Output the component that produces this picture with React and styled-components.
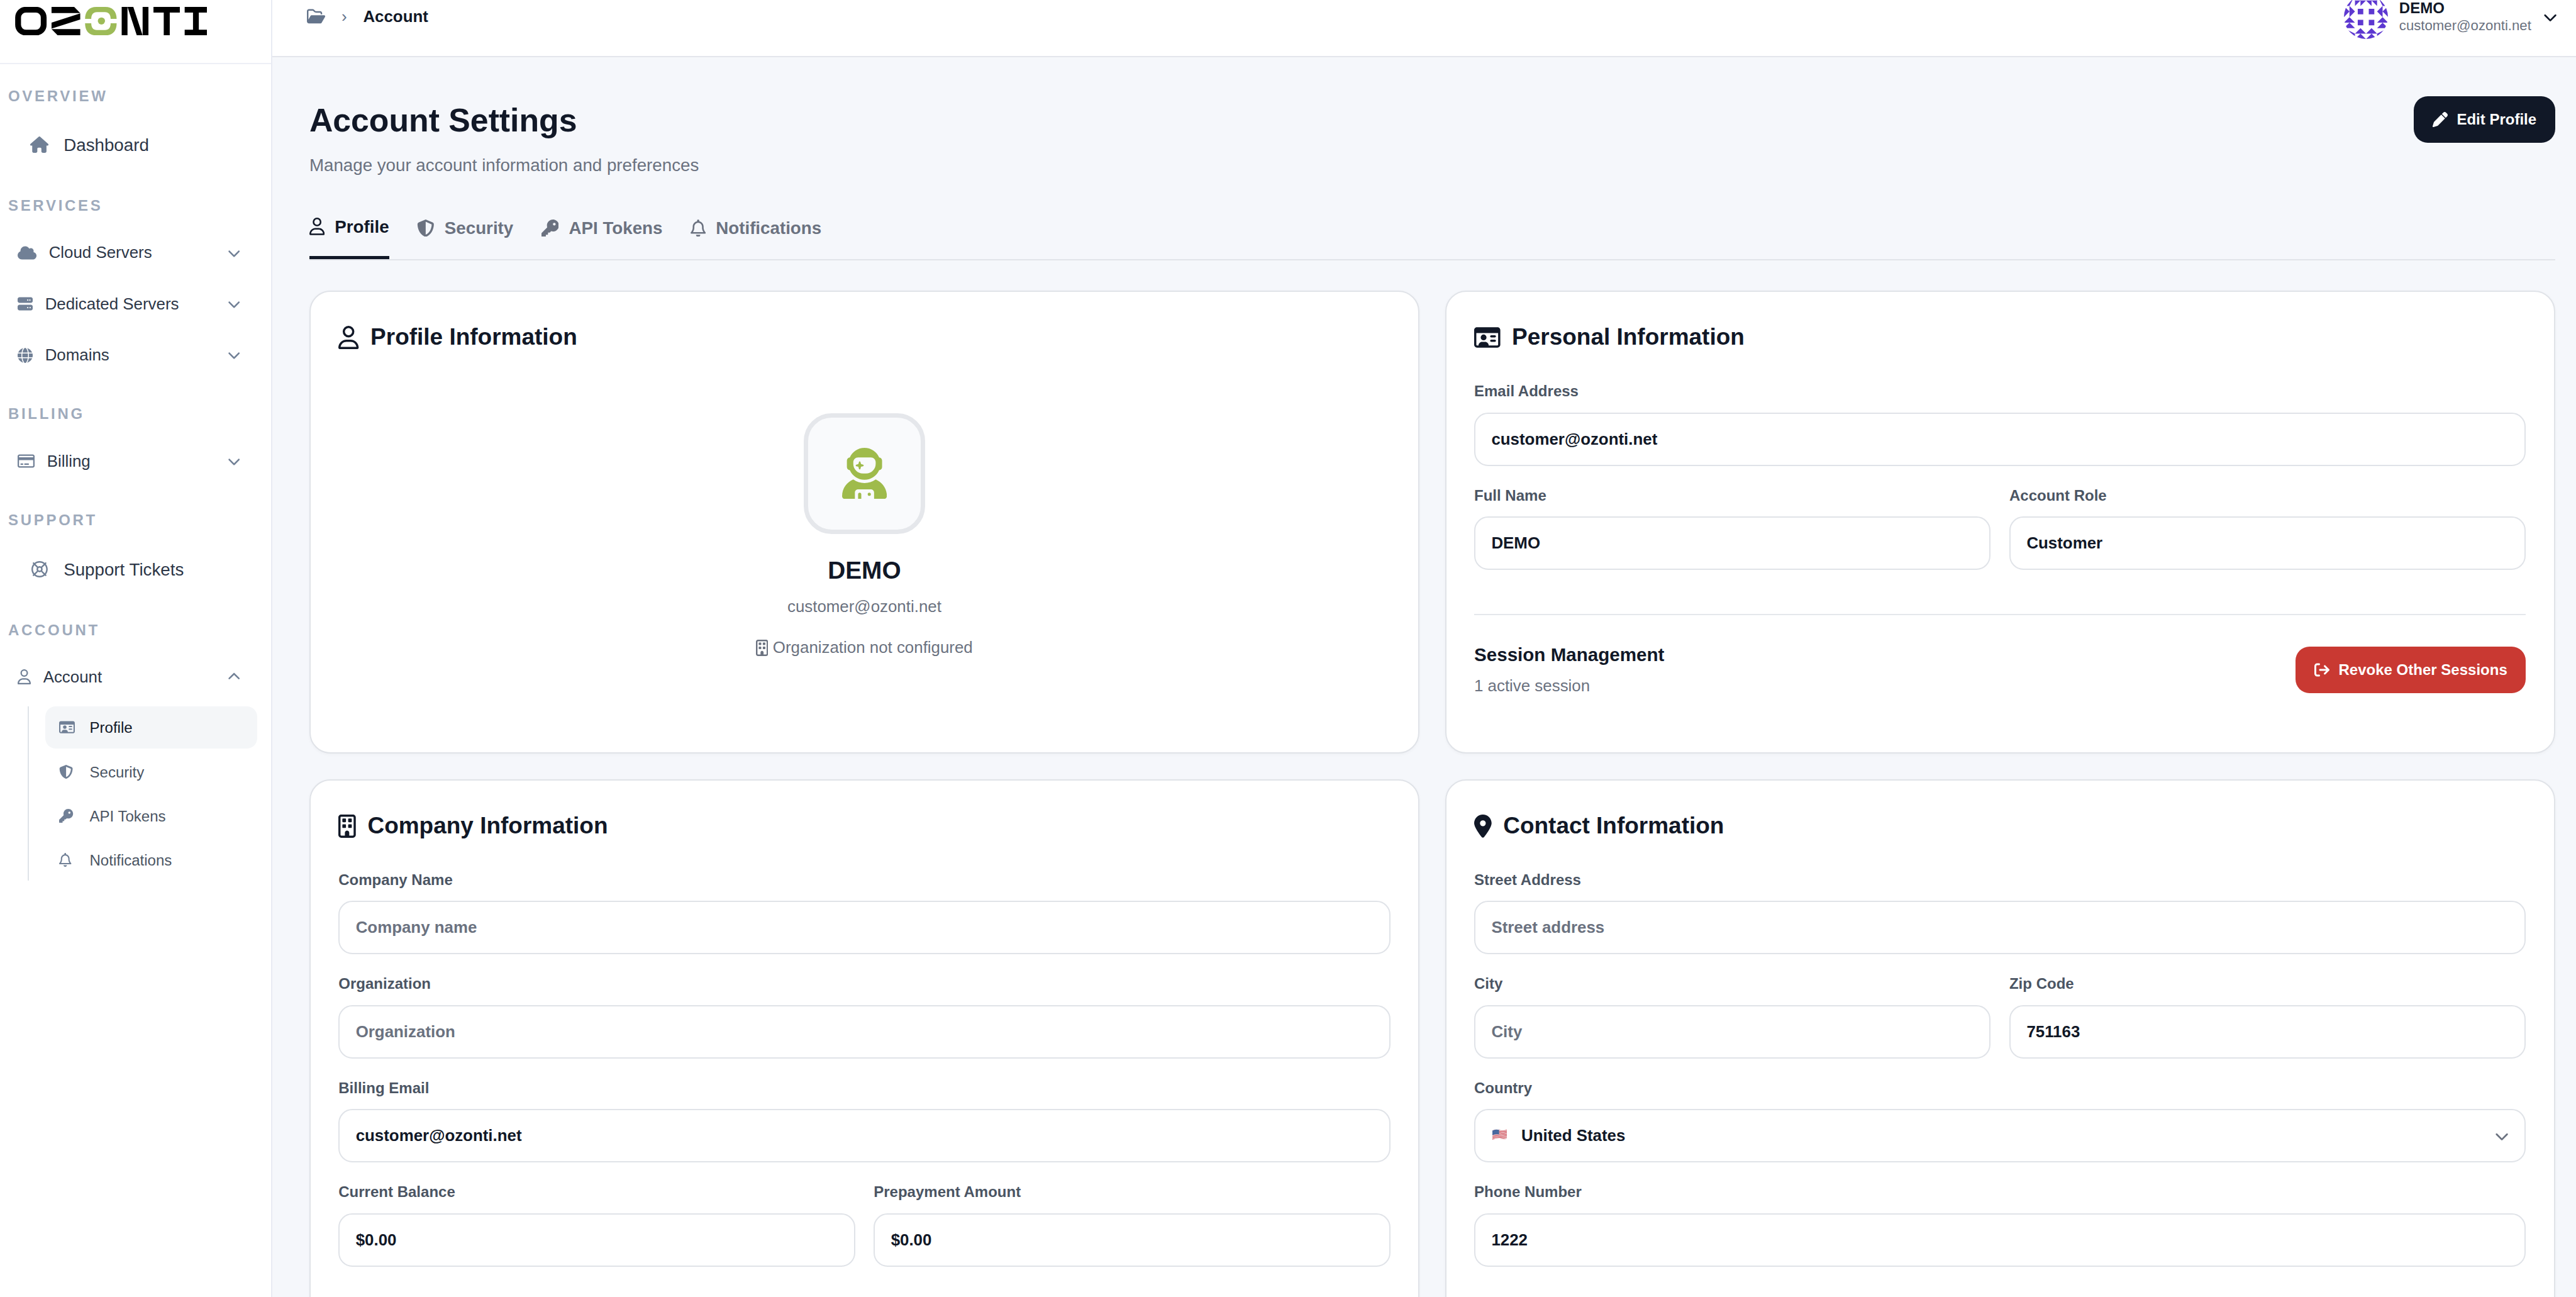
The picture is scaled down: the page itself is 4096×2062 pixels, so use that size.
import React from "react";
import styled, { createGlobalStyle, css } from "styled-components";
import {
  FaArrowRightFromBracket,
  FaChevronDown,
  FaChevronUp,
  FaCloud,
  FaGlobe,
  FaHouse,
  FaKey,
  FaLocationDot,
  FaPen,
  FaRegBell,
  FaRegBuilding,
  FaRegCreditCard,
  FaRegFolderOpen,
  FaRegIdCard,
  FaRegLifeRing,
  FaRegUser,
  FaServer,
  FaShieldHalved,
  FaUserAstronaut,
} from "react-icons/fa6";

/* The root font size follows the window width, every length below is in rem. */
const GlobalStyle = createGlobalStyle`
  *, *::before, *::after { box-sizing: border-box; }
  html { font-size: calc(100vw / 443); }
  body {
    margin: 0;
    overflow: hidden;
    background: #f5f7fb;
    color: #111827;
    font-family: "Liberation Sans", Arial, sans-serif;
    -webkit-font-smoothing: antialiased;
  }
  svg { display: block; flex: none; }
`;

/* Icons keep the advance width of their glyph: 512 units is one icon height. */
const glyph = (Component, units) => styled(Component)`
  width: calc(var(--icon) * ${units / 512});
  height: var(--icon);
`;

const HouseIcon = glyph(FaHouse, 576);
const CloudIcon = glyph(FaCloud, 640);
const ServerIcon = glyph(FaServer, 512);
const GlobeIcon = glyph(FaGlobe, 512);
const CreditCardIcon = glyph(FaRegCreditCard, 576);
const LifeRingIcon = glyph(FaRegLifeRing, 512);
const UserIcon = glyph(FaRegUser, 448);
const IdCardIcon = glyph(FaRegIdCard, 576);
const ShieldIcon = glyph(FaShieldHalved, 512);
const KeyIcon = glyph(FaKey, 512);
const BellIcon = glyph(FaRegBell, 448);
const FolderIcon = glyph(FaRegFolderOpen, 576);
const PenIcon = glyph(FaPen, 512);
const AstronautIcon = glyph(FaUserAstronaut, 448);
const BuildingIcon = glyph(FaRegBuilding, 384);
const PinIcon = glyph(FaLocationDot, 384);
const SignOutIcon = glyph(FaArrowRightFromBracket, 512);

const Page = styled.div`
  display: flex;
  height: 100vh;
  overflow: hidden;
`;

/* ---------- Sidebar ---------- */

const Sidebar = styled.aside`
  flex: none;
  width: 46.8rem;
  background: #fff;
  border-right: 2px solid #e8ebf3;
`;

const Brand = styled.div`
  height: 11rem;
  padding: 1.2rem 0 0 2.57rem;
  border-bottom: 2px solid #edeff6;

  svg {
    width: 33.03rem;
    height: 4.9rem;
  }
`;

const Nav = styled.nav`
  display: flex;
  flex-direction: column;
  gap: 1rem;
  padding-top: 0.55rem;
`;

const Section = styled.section`
  padding-top: 2.9rem;
`;

const SectionLabel = styled.div`
  height: 4rem;
  margin-bottom: 1.96rem;
  padding-left: 1.4rem;
  line-height: 4.2rem;
  font-size: 2.6rem;
  font-weight: 700;
  letter-spacing: 0.4rem;
  color: #9fabbc;
`;

const Label = styled.span`
  padding-top: 0.2rem;
`;

const NavLink = styled.div`
  display: flex;
  align-items: center;
  height: 9rem;
  padding-left: 4.8rem;
  font-size: 3rem;
  color: #2d3748;
`;

const NavLinkIcon = styled.span`
  --icon: 2.8rem;
  display: flex;
  justify-content: center;
  width: 4rem;
  margin-right: 2.15rem;
  color: #718096;
`;

const NavGroups = styled.div`
  display: flex;
  flex-direction: column;
  gap: 0.4rem;
`;

const NavGroup = styled.div`
  --icon: 2.6rem;
  display: flex;
  align-items: center;
  gap: 2.15rem;
  height: 8.4rem;
  padding: 0 5.2rem 0 3rem;
  font-size: 2.8rem;
  color: #2d3748;

  svg {
    color: #718096;
  }

  svg:last-child {
    width: 2.2rem;
    height: 2.2rem;
    margin-left: auto;
  }
`;

const SubNav = styled.div`
  display: flex;
  flex-direction: column;
  gap: 0.4rem;
  margin: 0.85rem 2.4rem 0 4.8rem;
  padding-left: 2.8rem;
  border-left: 2px solid #dfe4e9;
`;

const SubLink = styled.div`
  display: flex;
  align-items: center;
  height: 7.2rem;
  padding-left: 2.4rem;
  border-radius: 1.8rem;
  font-size: 2.6rem;
  background: ${(p) => (p.$active ? "#f4f6f8" : "transparent")};
  color: ${(p) => (p.$active ? "#111827" : "#4b5563")};
`;

const SubLinkIcon = styled.span`
  --icon: 2.4rem;
  width: 5.2rem;
  color: #718096;
`;

/* ---------- Top bar ---------- */

const Content = styled.div`
  flex: 1;
  min-width: 0;
  display: flex;
  flex-direction: column;
`;

const TopBar = styled.header`
  flex: none;
  display: flex;
  justify-content: space-between;
  align-items: flex-start;
  height: 9.8rem;
  padding: 0 3.2rem 0 6rem;
  background: #fff;
  border-bottom: 2px solid #e4e6ec;
`;

const Breadcrumb = styled.div`
  --icon: 2.8rem;
  display: flex;
  align-items: center;
  height: 5.6rem;
  font-size: 2.8rem;
  color: #64748b;
`;

const Separator = styled.span`
  width: 6.5rem;
  padding-top: 0.2rem;
  text-align: center;
`;

const Crumb = styled.span`
  padding-top: 0.2rem;
  font-weight: 700;
  color: #111827;
`;

const UserMenu = styled.div`
  display: flex;
  align-items: center;
  height: 5.8rem;
`;

const Identicon = styled.div`
  width: 7.6rem;
  height: 7.6rem;
  margin-right: 1.9rem;
  border-radius: 50%;
  overflow: hidden;

  svg {
    width: 100%;
    height: 100%;
  }
`;

const UserText = styled.div`
  display: flex;
  flex-direction: column;
  margin-right: 2.1rem;
  line-height: 2.96rem;
`;

const UserName = styled.strong`
  font-size: 2.6rem;
`;

const UserEmail = styled.span`
  font-size: 2.4rem;
  color: #6b7280;
`;

const UserChevron = styled(FaChevronDown)`
  width: 2.4rem;
  height: 2.4rem;
`;

/* ---------- Page header ---------- */

const Main = styled.main`
  flex: 1;
  min-height: 0;
  padding: 6.8rem 3.6rem 0 6.4rem;
`;

const PageHeader = styled.div`
  display: flex;
  justify-content: space-between;
  align-items: flex-start;
  height: 17.2rem;
`;

const Title = styled.h1`
  margin: 0.95rem 0 0;
  font-size: 5.6rem;
  line-height: 6.4rem;
  font-weight: 700;
`;

const Subtitle = styled.p`
  margin: 2.6rem 0 0;
  font-size: 3rem;
  line-height: 4rem;
  color: #6b7280;
`;

const Button = styled.button`
  --icon: 2.6rem;
  display: inline-flex;
  align-items: center;
  gap: 1.6rem;
  height: 8rem;
  padding: 0 3.2rem;
  border: 0;
  border-radius: 2.4rem;
  background: ${(p) => (p.$danger ? "#c93932" : "#111827")};
  color: #fff;
  font: 700 2.6rem "Liberation Sans", Arial, sans-serif;
  white-space: nowrap;
`;

const Tabs = styled.div`
  display: flex;
  gap: 4.8rem;
  height: 11rem;
  border-bottom: 2px solid #e1e4e9;
`;

const Tab = styled.div`
  --icon: 3rem;
  display: flex;
  align-items: center;
  gap: 1.75rem;
  height: 10.8rem;
  font-size: 3rem;
  font-weight: 700;
  color: #6b7280;

  ${(p) =>
    p.$active &&
    css`
      color: #111827;
      border-bottom: 0.6rem solid #111827;
    `}
`;

/* ---------- Cards ---------- */

const Cards = styled.div`
  display: grid;
  grid-template-columns: 1fr 1fr;
  grid-template-rows: 79.6rem auto;
  gap: 4.4rem;
  margin-top: 5.2rem;
`;

const Card = styled.section`
  min-height: 96rem;
  padding: 4.8rem;
  border: 2px solid #e0e3e8;
  border-radius: 3.6rem;
  background: #fff;
  box-shadow: 0 0.2rem 0.6rem rgba(15, 23, 42, 0.03);

  &:nth-child(-n + 2) {
    min-height: 0;
  }
`;

const CardTitle = styled.h2`
  --icon: 4rem;
  display: flex;
  align-items: center;
  gap: 2rem;
  height: 6rem;
  margin: 0 0 4.75rem;
  font-size: 4rem;
  font-weight: 700;
`;

const Fields = styled.div`
  display: grid;
  grid-template-columns: 1fr 1fr;
  gap: 3.55rem 3.2rem;
`;

const FieldWrap = styled.div`
  grid-column: span ${(p) => (p.$half ? 1 : 2)};
`;

const FieldLabel = styled.div`
  margin-bottom: 2.15rem;
  font-size: 2.6rem;
  line-height: 3rem;
  font-weight: 700;
  color: #4b5563;
`;

const FieldBox = styled.div`
  display: flex;
  align-items: center;
  height: 9.2rem;
  padding: 0 2.75rem;
  border: 2px solid #e0e3e8;
  border-radius: 2.4rem;
  font-size: 2.8rem;
  font-weight: 700;
  color: ${(p) => (p.$placeholder ? "#6b7280" : "#111827")};
`;

const FlagIcon = styled.svg`
  width: 2.5rem;
  height: 1.9rem;
  margin: 0 2.5rem 0.4rem 0.15rem;
`;

const SelectChevron = styled(FaChevronDown)`
  width: 2.4rem;
  height: 2.4rem;
  margin-left: auto;
  color: #6b7280;
`;

const ProfileSummary = styled.div`
  display: flex;
  flex-direction: column;
  align-items: center;
  padding-top: 5.25rem;
`;

const ProfileAvatar = styled.div`
  --icon: 8.8rem;
  display: flex;
  align-items: center;
  justify-content: center;
  width: 20.8rem;
  height: 20.8rem;
  border: 0.8rem solid #e5e7eb;
  border-radius: 4.8rem;
  background: #f9fafc;
  color: #9fbb4b;
`;

const ProfileName = styled.div`
  margin-top: 3.85rem;
  font-size: 4.2rem;
  line-height: 5rem;
  font-weight: 700;
`;

const ProfileLine = styled.div`
  --icon: 2.8rem;
  display: flex;
  align-items: center;
  gap: 0.8rem;
  margin-top: ${(p) => p.$space};
  font-size: 2.8rem;
  line-height: 3.2rem;
  color: #6b7280;
`;

const Sessions = styled.div`
  display: flex;
  justify-content: space-between;
  align-items: flex-start;
  margin-top: 7.6rem;
  padding-top: 5.4rem;
  border-top: 2px solid #e5e7eb;
`;

const SessionTitle = styled.div`
  margin-bottom: 2.1rem;
  font-size: 3.2rem;
  line-height: 3.4rem;
  font-weight: 700;
`;

const SessionCount = styled.div`
  font-size: 2.8rem;
  line-height: 3.2rem;
  color: #6b7280;
`;

const SessionText = styled.div`
  margin-top: -0.35rem;
`;

/* ---------- Drawings ---------- */

const Logo = () => (
  <svg viewBox="77 36 991 147" preserveAspectRatio="none">
    <rect x="92.5" y="50.5" width="132" height="118" rx="40" fill="none" stroke="#000" strokeWidth="30" />
    <polygon points="265,36 382,36 413,68 265,68" />
    <polygon points="413,69 413,101 265,148 265,117" />
    <polygon points="265,150 413,150 413,183 297,183" />
    <g fill="#9dbb58">
      <path d="M438 98C438 58 460 36 496 36H543C579 36 601 58 601 98H570C570 76 560 63 541 63H499C480 63 470 76 470 98Z" />
      <path d="M438 120C438 161 460 183 496 183H543C579 183 601 161 601 120H570C570 142 560 155 541 155H499C480 155 470 142 470 120Z" />
      <circle cx="522.5" cy="108.5" r="18.5" />
    </g>
    <rect x="627" y="36" width="30" height="147" />
    <polygon points="657,36 687,36 735,183 705,183" />
    <rect x="735" y="36" width="30" height="147" />
    <path d="M791 36H927V65H875V183H844V65H791Z" />
    <path d="M952 36H1068V65H1025V154H1068V183H952V154H995V65H952Z" />
  </svg>
);

const IdenticonArt = () => (
  <svg viewBox="0 0 8 8" fill="#5d38d0">
    <path d="M2 0 1 2H0V0ZM6 0 7 2H8V0Z" />
    <path d="M2 0H3L2 1ZM3 0H4L3 1ZM2 1H3L2 2ZM3 1H4L3 2ZM4 0H5V1ZM5 0H6V1ZM4 1H5V2ZM5 1H6V2Z" />
    <path d="M0 2 1 3 0 4ZM1 2 2 3 1 4ZM8 2 7 3 8 4ZM7 2 6 3 7 4Z" />
    <path d="M1 4 2 5H0ZM1 5 2 6H0ZM7 4 8 5H6ZM7 5 8 6H6Z" />
    <path d="M3 6 4 7H2ZM3 7 4 8H2ZM5 6 6 7H4ZM5 7 6 8H4Z" />
    <path d="M0 6 2 7V8H0ZM8 6 6 7V8H8Z" />
    <path d="M2.5 2.5h1v1h-1ZM4.5 2.5h1v1h-1ZM2.5 4.5h1v1h-1ZM4.5 4.5h1v1h-1Z" />
  </svg>
);

const UsFlag = () => (
  <FlagIcon viewBox="0 0 50 36" preserveAspectRatio="none">
    <defs>
      <clipPath id="flag-wave">
        <path d="M0 5C10 1 16 1 25 3S42 5 50 2V30C42 34 34 33 25 31S10 31 0 35Z" />
      </clipPath>
    </defs>
    <g clipPath="url(#flag-wave)">
      <rect width="50" height="36" fill="#f3eeee" />
      {[0, 1, 2, 3, 4, 5, 6].map((i) => (
        <path
          key={i}
          d={`M0 ${5 + i * 4.8}C10 ${1 + i * 4.8} 16 ${1 + i * 4.8} 25 ${3 + i * 4.8}S42 ${5 + i * 4.8} 50 ${2 + i * 4.8}`}
          fill="none"
          stroke="#cf4450"
          strokeWidth="2.4"
        />
      ))}
      <path d="M0 0H23V18C14 16 8 17 0 20Z" fill="#48699f" />
    </g>
  </FlagIcon>
);

/* ---------- Compositions ---------- */

const Field = ({ label, value, placeholder, half, children }) => (
  <FieldWrap $half={half}>
    <FieldLabel>{label}</FieldLabel>
    <FieldBox $placeholder={Boolean(placeholder)}>{children || value || placeholder}</FieldBox>
  </FieldWrap>
);

const Group = ({ icon: Icon, label, open }) => (
  <NavGroup>
    <Icon />
    <span>{label}</span>
    {open ? <FaChevronUp /> : <FaChevronDown />}
  </NavGroup>
);

const accountLinks = [
  { label: "Profile", icon: IdCardIcon, active: true },
  { label: "Security", icon: ShieldIcon },
  { label: "API Tokens", icon: KeyIcon },
  { label: "Notifications", icon: BellIcon },
];

const tabs = [
  { label: "Profile", icon: UserIcon, active: true },
  { label: "Security", icon: ShieldIcon },
  { label: "API Tokens", icon: KeyIcon },
  { label: "Notifications", icon: BellIcon },
];

export default function App() {
  return (
    <>
      <GlobalStyle />
      <Page>
        <Sidebar>
          <Brand>
            <Logo />
          </Brand>
          <Nav>
            <Section>
              <SectionLabel>OVERVIEW</SectionLabel>
              <NavLink>
                <NavLinkIcon>
                  <HouseIcon />
                </NavLinkIcon>
                <Label>Dashboard</Label>
              </NavLink>
            </Section>
            <Section>
              <SectionLabel>SERVICES</SectionLabel>
              <NavGroups>
                <Group icon={CloudIcon} label="Cloud Servers" />
                <Group icon={ServerIcon} label="Dedicated Servers" />
                <Group icon={GlobeIcon} label="Domains" />
              </NavGroups>
            </Section>
            <Section>
              <SectionLabel>BILLING</SectionLabel>
              <Group icon={CreditCardIcon} label="Billing" />
            </Section>
            <Section>
              <SectionLabel>SUPPORT</SectionLabel>
              <NavLink>
                <NavLinkIcon>
                  <LifeRingIcon />
                </NavLinkIcon>
                <Label>Support Tickets</Label>
              </NavLink>
            </Section>
            <Section>
              <SectionLabel>ACCOUNT</SectionLabel>
              <Group icon={UserIcon} label="Account" open />
              <SubNav>
                {accountLinks.map(({ label, icon: Icon, active }) => (
                  <SubLink key={label} $active={active}>
                    <SubLinkIcon>
                      <Icon />
                    </SubLinkIcon>
                    <Label>{label}</Label>
                  </SubLink>
                ))}
              </SubNav>
            </Section>
          </Nav>
        </Sidebar>

        <Content>
          <TopBar>
            <Breadcrumb>
              <FolderIcon />
              <Separator>›</Separator>
              <Crumb>Account</Crumb>
            </Breadcrumb>
            <UserMenu>
              <Identicon>
                <IdenticonArt />
              </Identicon>
              <UserText>
                <UserName>DEMO</UserName>
                <UserEmail>customer@ozonti.net</UserEmail>
              </UserText>
              <UserChevron />
            </UserMenu>
          </TopBar>

          <Main>
            <PageHeader>
              <div>
                <Title>Account Settings</Title>
                <Subtitle>Manage your account information and preferences</Subtitle>
              </div>
              <Button>
                <PenIcon />
                Edit Profile
              </Button>
            </PageHeader>

            <Tabs>
              {tabs.map(({ label, icon: Icon, active }) => (
                <Tab key={label} $active={active}>
                  <Icon />
                  <Label>{label}</Label>
                </Tab>
              ))}
            </Tabs>

            <Cards>
              <Card>
                <CardTitle>
                  <UserIcon />
                  Profile Information
                </CardTitle>
                <ProfileSummary>
                  <ProfileAvatar>
                    <AstronautIcon />
                  </ProfileAvatar>
                  <ProfileName>DEMO</ProfileName>
                  <ProfileLine $space="2.1rem">customer@ozonti.net</ProfileLine>
                  <ProfileLine $space="3.8rem">
                    <BuildingIcon />
                    Organization not configured
                  </ProfileLine>
                </ProfileSummary>
              </Card>

              <Card>
                <CardTitle>
                  <IdCardIcon />
                  Personal Information
                </CardTitle>
                <Fields>
                  <Field label="Email Address" value="customer@ozonti.net" />
                  <Field half label="Full Name" value="DEMO" />
                  <Field half label="Account Role" value="Customer" />
                </Fields>
                <Sessions>
                  <SessionText>
                    <SessionTitle>Session Management</SessionTitle>
                    <SessionCount>1 active session</SessionCount>
                  </SessionText>
                  <Button $danger>
                    <SignOutIcon />
                    Revoke Other Sessions
                  </Button>
                </Sessions>
              </Card>

              <Card>
                <CardTitle>
                  <BuildingIcon />
                  Company Information
                </CardTitle>
                <Fields>
                  <Field label="Company Name" placeholder="Company name" />
                  <Field label="Organization" placeholder="Organization" />
                  <Field label="Billing Email" value="customer@ozonti.net" />
                  <Field half label="Current Balance" value="$0.00" />
                  <Field half label="Prepayment Amount" value="$0.00" />
                </Fields>
              </Card>

              <Card>
                <CardTitle>
                  <PinIcon />
                  Contact Information
                </CardTitle>
                <Fields>
                  <Field label="Street Address" placeholder="Street address" />
                  <Field half label="City" placeholder="City" />
                  <Field half label="Zip Code" value="751163" />
                  <Field label="Country">
                    <UsFlag />
                    United States
                    <SelectChevron />
                  </Field>
                  <Field label="Phone Number" value="1222" />
                </Fields>
              </Card>
            </Cards>
          </Main>
        </Content>
      </Page>
    </>
  );
}
